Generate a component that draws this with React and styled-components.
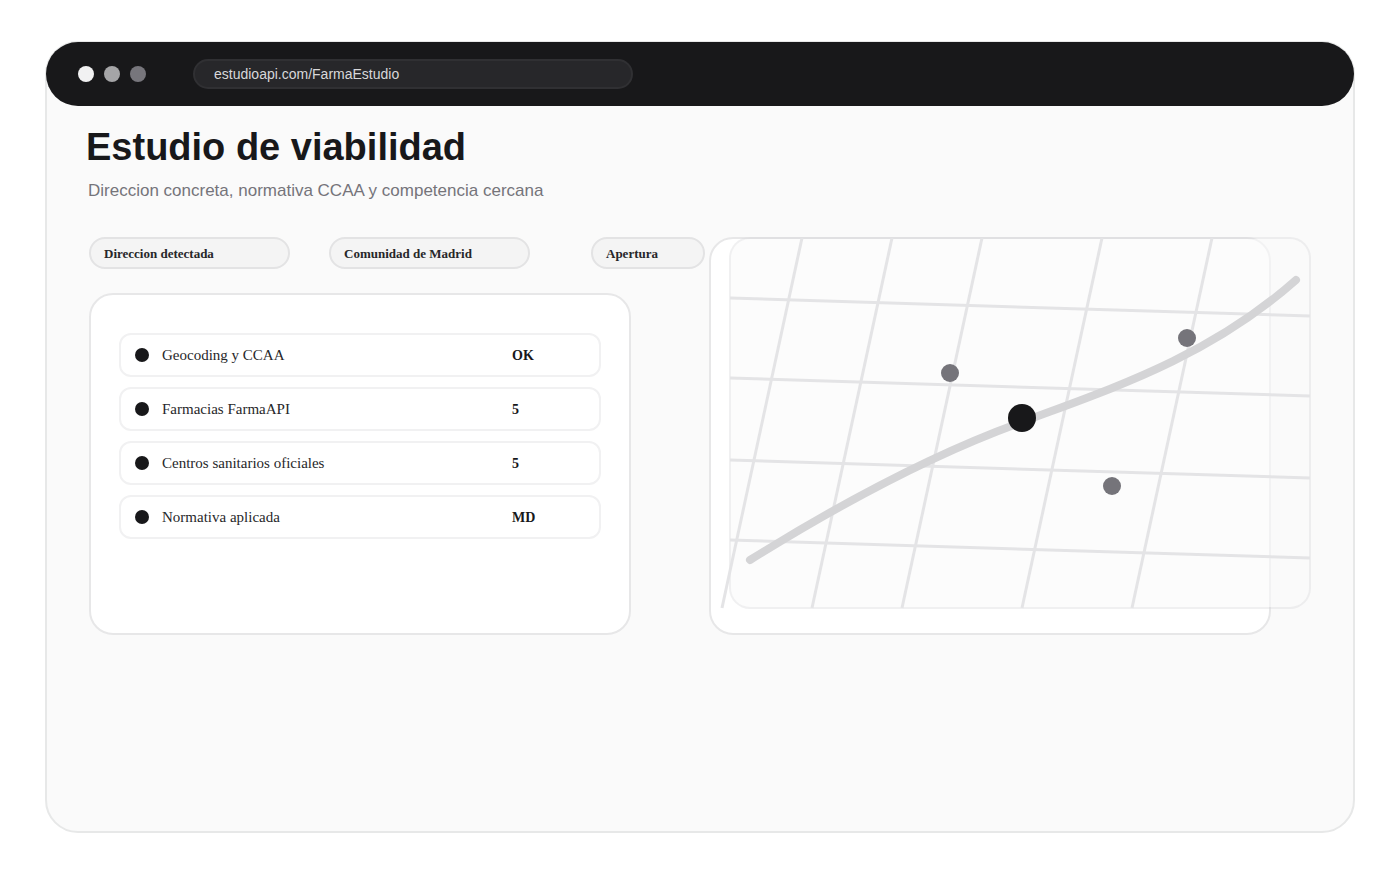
import React from "react";
import styled, { createGlobalStyle } from "styled-components";

const checks = [
    { label: "Geocoding y CCAA", value: "OK" },
    { label: "Farmacias FarmaAPI", value: "5" },
    { label: "Centros sanitarios oficiales", value: "5" },
    { label: "Normativa aplicada", value: "MD" },
];

const streets = [802, 892, 982, 1102, 1212];
const avenues = [298, 378, 460, 540];

const App = () => {
    return (
        <Page>
            <GlobalStyle />
            <Window>
                <TopBar>
                    <Lights>
                        <Light color="#f1f1f2" />
                        <Light color="#a5a5a7" />
                        <Light color="#77767c" />
                    </Lights>
                    <Address
                        type="text"
                        aria-label="Direccion web"
                        defaultValue="estudioapi.com/FarmaEstudio"
                    />
                </TopBar>
                <Header>
                    <h1>Estudio de viabilidad</h1>
                    <p>Direccion concreta, normativa CCAA y competencia cercana</p>
                </Header>
                <Content>
                    <Summary>
                        <Tags>
                            <Tag>Direccion detectada</Tag>
                            <Tag>Comunidad de Madrid</Tag>
                            <Tag $small>Apertura</Tag>
                        </Tags>
                        <ChecksPanel>
                            {checks.map((check) => (
                                <Check key={check.label}>
                                    <Bullet />
                                    <span>{check.label}</span>
                                    <strong>{check.value}</strong>
                                </Check>
                            ))}
                        </ChecksPanel>
                    </Summary>
                    <MapArea>
                        <MapPanel />
                        <MapSurface />
                        <StreetMap />
                    </MapArea>
                </Content>
            </Window>
        </Page>
    );
};

const StreetMap = () => (
    <Drawing viewBox="709 237 602 398" role="img" aria-label="Mapa">
        <g stroke="#e4e4e6" strokeWidth="3" fill="none">
            {avenues.map((y) => (
                <path key={y} d={`M730 ${y} L1310 ${y + 18}`} />
            ))}
            {streets.map((x) => (
                <path key={x} d={`M${x} 238 L${x - 80} 608`} />
            ))}
        </g>
        <path
            d="M750 560 C840 504 930 455 1022 422 C1110 389 1208 358 1296 280"
            stroke="#d4d4d6"
            strokeWidth="8"
            strokeLinecap="round"
            fill="none"
        />
        <circle cx="1022" cy="418" r="14" fill="#18181a" />
        <g fill="#75747a">
            <circle cx="950" cy="373" r="9" />
            <circle cx="1187" cy="338" r="9" />
            <circle cx="1112" cy="486" r="9" />
        </g>
    </Drawing>
);

export default App;

const GlobalStyle = createGlobalStyle`
    * {
        box-sizing: border-box;
    }

    body {
        margin: 0;
        background: #fff;
        color: #18181a;
        font-family: "Liberation Serif", serif;
    }
`;

const Page = styled.main`
    display: flex;
    min-height: 100vh;
    padding: 41px 45px 42px;
`;

const Window = styled.div`
    flex: 1;
    min-width: 0;
    background: #fafafa;
    border: 2px solid #e7e8e8;
    border-radius: 33px;
`;

const TopBar = styled.div`
    display: flex;
    align-items: center;
    gap: 47px;
    height: 64px;
    margin: -1px;
    padding: 0 32px;
    background: #18181a;
    border-radius: 32px;
`;

const Lights = styled.div`
    display: flex;
    gap: 10px;
`;

const Light = styled.span`
    width: 16px;
    height: 16px;
    border-radius: 50%;
    background: ${(props) => props.color};
`;

const Address = styled.input`
    width: 440px;
    height: 30px;
    padding: 0 19px;
    color: #d8d8da;
    background: #27272a;
    border: 2px solid #303033;
    border-radius: 15px;
    font: 14px "Liberation Sans", sans-serif;
`;

const Header = styled.header`
    padding-top: 20px;
    font-family: "Liberation Sans", sans-serif;

    h1 {
        margin: 0;
        padding: 0 39px;
        font-size: 38px;
        line-height: 44px;
    }

    p {
        margin: 12px 0 0;
        padding: 0 41px;
        font-size: 17px;
        line-height: 20px;
        color: #75747a;
    }
`;

const Content = styled.div`
    display: grid;
    grid-template-columns: minmax(0, 616fr) minmax(0, 602fr);
    column-gap: 4px;
    align-items: start;
    padding: 36px 42px;
`;

const Summary = styled.section`
    display: flex;
    flex-direction: column;
    gap: 24px;
`;

const Tags = styled.div`
    display: flex;
    gap: 39px;
`;

const Tag = styled.span`
    width: ${(props) => (props.$small ? "114px" : "201px")};
    height: 32px;
    margin-left: ${(props) => (props.$small ? "auto" : "0")};
    padding: 0 13px;
    background: #f4f4f4;
    border: 2px solid #e3e3e4;
    border-radius: 16px;
    color: #27272a;
    font-size: 13px;
    font-weight: 700;
    line-height: 30px;
`;

const Panel = styled.div`
    background: #fff;
    border: 2px solid #e7e7e8;
    border-radius: 24px;
`;

const ChecksPanel = styled(Panel).attrs({ as: "ul" })`
    display: flex;
    flex-direction: column;
    gap: 10px;
    min-height: 342px;
    margin: 0 74px 0 0;
    padding: 38px 28px;
    list-style: none;
`;

const Check = styled.li`
    display: grid;
    grid-template-columns: 14px 1fr 87px;
    grid-template-rows: 40px;
    column-gap: 13px;
    align-items: baseline;
    padding-left: 14px;
    border: 2px solid #f1f1f2;
    border-radius: 12px;
    color: #27272a;
    font-size: 15px;
    line-height: 40px;

    strong {
        color: #18181a;
        font-size: 14px;
    }
`;

const Bullet = styled.i`
    align-self: center;
    height: 14px;
    border-radius: 50%;
    background: #18181a;
`;

// panel, surface and streets share one cell so they stack on each other
const MapArea = styled.section`
    display: grid;

    > * {
        grid-area: 1 / 1;
    }
`;

const MapPanel = styled(Panel)`
    margin-right: 40px;
`;

const MapSurface = styled.div`
    margin: 0 0 26px 20px;
    background: rgba(250, 250, 250, 0.6);
    background-clip: padding-box;
    border: 2px solid rgba(212, 212, 216, 0.35);
    border-radius: 21px;
`;

const Drawing = styled.svg`
    display: block;
    width: 100%;
`;
